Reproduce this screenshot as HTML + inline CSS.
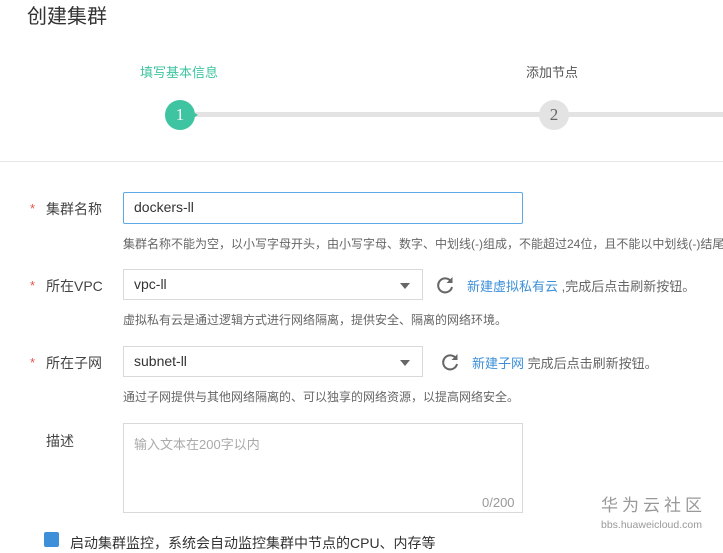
<!DOCTYPE html>
<html><head><meta charset="utf-8"><style>
body{margin:0;width:723px;height:540px;overflow:hidden;background:#fff;font-family:"Liberation Sans","Noto Sans CJK SC",sans-serif;position:relative;color:#333}
.a{position:absolute;white-space:nowrap}
.box{position:absolute;border:1px solid #d9d9d9;box-sizing:border-box;background:#fff}
.lab{font-size:14px;color:#444}
.star{color:#e8544e;font-size:13px}
.help{font-size:12px;color:#666}
.link{color:#3d8fd9}
.arrow{position:absolute;right:12px;top:13px;width:0;height:0;border-left:5px solid transparent;border-right:5px solid transparent;border-top:6px solid #666}
</style></head><body>
<div class="a" style="left:27px;top:0px;font-size:20px;color:#333">创建集群</div>
<div class="a" style="left:140px;top:62px;font-size:13px;color:#3ec4a0">填写基本信息</div>
<div class="a" style="left:526px;top:62px;font-size:13px;color:#555">添加节点</div>
<div class="a" style="left:195px;top:112px;width:528px;height:5px;background:#e3e3e3"></div>
<div class="a" style="left:165px;top:100px;width:30px;height:30px;border-radius:50%;background:#3ec4a0;color:#fff;font-size:17px;line-height:30px;text-align:center;font-family:'Liberation Serif',serif">1</div>
<div class="a" style="left:190px;top:110px;width:0;height:0;border-top:5px solid transparent;border-bottom:5px solid transparent;border-left:8px solid #3ec4a0"></div>
<div class="a" style="left:539px;top:100px;width:30px;height:30px;border-radius:50%;background:#e3e3e3;color:#666;font-size:17px;line-height:30px;text-align:center;font-family:'Liberation Serif',serif">2</div>
<div class="a" style="left:0;top:161px;width:723px;height:1px;background:#e6e6e6"></div>

<div class="a star" style="left:30px;top:201px">*</div>
<div class="a lab" style="left:46px;top:199px">集群名称</div>
<div class="box" style="left:123px;top:192px;width:400px;height:32px;border-color:#5fa8e6;border-radius:2px"></div>
<div class="a" style="left:134px;top:199px;font-size:14px;color:#333">dockers-ll</div>
<div class="a help" style="left:123px;top:235px">集群名称不能为空，以小写字母开头，由小写字母、数字、中划线(-)组成，不能超过24位，且不能以中划线(-)结尾</div>

<div class="a star" style="left:30px;top:278px">*</div>
<div class="a lab" style="left:46px;top:276px">所在VPC</div>
<div class="box" style="left:123px;top:269px;width:300px;height:31px"><div class="arrow"></div></div>
<div class="a" style="left:134px;top:276px;font-size:14px">vpc-ll</div>
<svg class="a" style="left:436px;top:275px" width="19" height="19" viewBox="0 0 19 19"><path d="M15 6.5A7 7 0 1 0 16 12" fill="none" stroke="#666" stroke-width="2"/><path d="M16.5 2v6h-6z" fill="#666"/></svg>
<div class="a" style="left:467px;top:276px;font-size:13px"><span class="link">新建虚拟私有云</span><span style="color:#666"> ,完成后点击刷新按钮。</span></div>
<div class="a help" style="left:123px;top:311px">虚拟私有云是通过逻辑方式进行网络隔离，提供安全、隔离的网络环境。</div>

<div class="a star" style="left:30px;top:355px">*</div>
<div class="a lab" style="left:46px;top:353px">所在子网</div>
<div class="box" style="left:123px;top:346px;width:300px;height:31px"><div class="arrow"></div></div>
<div class="a" style="left:134px;top:353px;font-size:14px">subnet-ll</div>
<svg class="a" style="left:441px;top:352px" width="19" height="19" viewBox="0 0 19 19"><path d="M15 6.5A7 7 0 1 0 16 12" fill="none" stroke="#666" stroke-width="2"/><path d="M16.5 2v6h-6z" fill="#666"/></svg>
<div class="a" style="left:472px;top:353px;font-size:13px"><span class="link">新建子网</span><span style="color:#666"> 完成后点击刷新按钮。</span></div>
<div class="a help" style="left:123px;top:388px">通过子网提供与其他网络隔离的、可以独享的网络资源，以提高网络安全。</div>

<div class="a lab" style="left:46px;top:431px">描述</div>
<div class="box" style="left:123px;top:423px;width:400px;height:90px"></div>
<div class="a" style="left:134px;top:434px;font-size:13px;color:#aaa">输入文本在200字以内</div>
<div class="a" style="left:482px;top:495px;font-size:13px;color:#999">0/200</div>

<div class="a" style="left:44px;top:532px;width:15px;height:15px;background:#3d8fd9;border-radius:2px"></div>
<div class="a" style="left:70px;top:533px;font-size:14px;color:#333">启动集群监控，系统会自动监控集群中节点的CPU、内存等</div>

<div class="a" style="left:601px;top:496px;font-size:17px;line-height:20px;color:#999;letter-spacing:4px">华为云社区</div>
<div class="a" style="left:601px;top:519px;font-size:10.5px;line-height:12px;color:#999">bbs.huaweicloud.com</div>
</body></html>
